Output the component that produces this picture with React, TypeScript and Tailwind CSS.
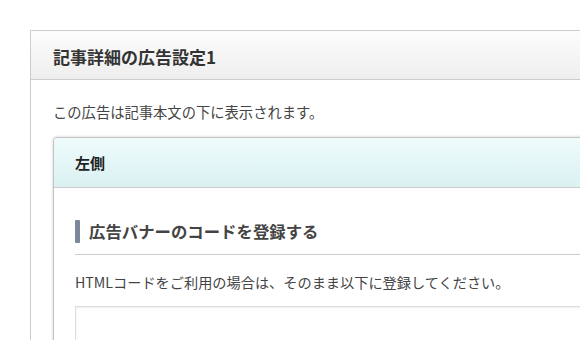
import React from "react";

export default function App() {
  const font = { fontFamily: '"Noto Sans CJK JP", "Noto Sans", sans-serif' };
  return (
    <div className="w-[580px] h-[340px] overflow-hidden bg-white pt-[30px] pl-[30px]" style={font}>
      <div className="w-[620px] border border-[#cccccc] bg-white">
        <div className="h-[49px] flex items-center pl-[22px] border-b border-[#cccccc] bg-gradient-to-b from-[#fdfdfd] to-[#eeeeee]">
          <h1 className="text-[17px] font-bold text-[#333333] leading-none pt-[2px]">記事詳細の広告設定1</h1>
        </div>
        <div className="pl-[22px] pt-[22px]">
          <p className="text-[14.3px] text-[#444444] leading-[20px]">この広告は記事本文の下に表示されます。</p>
          <div className="mt-[15px] w-[600px] h-[300px] border border-[#c4c4c4] rounded-tl-[4px] shadow-[0_0_3px_rgba(0,0,0,0.2)] bg-white">
            <div className="h-[50px] flex items-center pl-[21px] border-b border-[#cccccc] rounded-tl-[4px] bg-gradient-to-b from-[#eefbfb] to-[#daf1f2]">
              <h2 className="text-[15px] font-bold text-[#222222] leading-none">左側</h2>
            </div>
            <div className="pl-[21px] pt-[32px]">
              <div className="flex items-center gap-[9px] pb-[11px] border-b border-[#cccccc]">
                <span className="w-[5px] h-[23px] rounded-[1px] bg-[#7d879b]"></span>
                <h3 className="text-[16.4px] font-bold text-[#444444] leading-[23px]">広告バナーのコードを登録する</h3>
              </div>
              <p className="mt-[17px] text-[14.2px] text-[#444444] leading-[20px]">HTMLコードをご利用の場合は、そのまま以下に登録してください。</p>
              <div className="mt-[14px] h-[80px] border border-[#dddddd] shadow-[inset_0_1px_2px_rgba(0,0,0,0.08)]"></div>
            </div>
          </div>
        </div>
      </div>
    </div>
  );
}
